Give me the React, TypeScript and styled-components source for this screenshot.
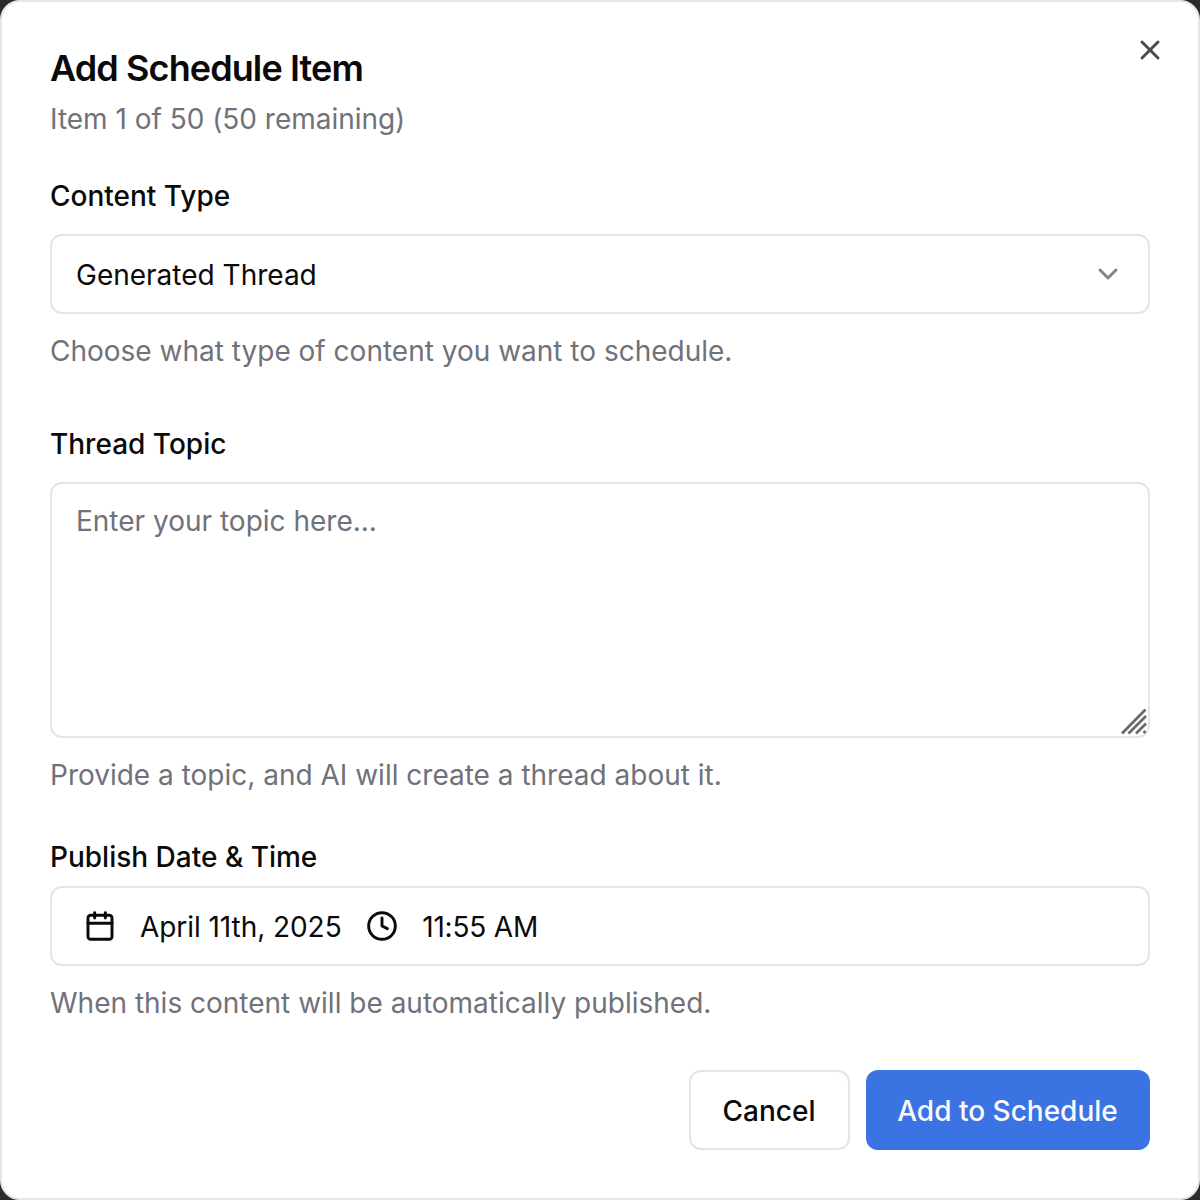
import React from "react";
import styled, { createGlobalStyle } from "styled-components";
import { X, ChevronDown, Calendar, Clock } from "lucide-react";

const Global = createGlobalStyle`
  html, body { margin: 0; padding: 0; background: #2b2b2b; }
  * { box-sizing: border-box; }
  body { font-family: Inter, "Liberation Sans", sans-serif; color: #0a0a0a; }
`;

const Dialog = styled.div`
  position: relative;
  width: 1200px;
  height: 1200px;
  background: #fff;
  border: 2px solid #e5e5e5;
  border-radius: 20px;
  padding: 48px;
  display: flex;
  flex-direction: column;
`;

const CloseButton = styled.button`
  position: absolute;
  top: 32px;
  right: 32px;
  width: 32px;
  height: 32px;
  padding: 0;
  border: 0;
  background: none;
  color: #4b4b50;
  display: flex;
  align-items: center;
  justify-content: center;
`;

const Header = styled.header`
  display: flex;
  flex-direction: column;
  gap: 12px;
  margin-bottom: 42px;
`;

const Title = styled.h2`
  margin: 0;
  font-size: 36px;
  line-height: 36px;
  font-weight: 600;
  letter-spacing: -0.9px;
  color: #0a0a0a;
`;

const Subtitle = styled.p`
  margin: 0;
  font-size: 28px;
  line-height: 42px;
  letter-spacing: -0.02px;
  color: #71717a;
`;

const Field = styled.div<{ $after: number }>`
  display: flex;
  flex-direction: column;
  margin-bottom: ${(p) => p.$after}px;
`;

const Label = styled.label<{ $gap: number }>`
  font-size: 28px;
  line-height: 28px;
  font-weight: 500;
  margin-bottom: ${(p) => p.$gap}px;
`;

const Control = styled.div`
  height: 80px;
  border: 2px solid #e5e5e5;
  border-radius: 12px;
  background: #fff;
  display: flex;
  align-items: center;
  font-size: 28px;
  color: #0a0a0a;
`;

const SelectBox = styled(Control)`
  justify-content: space-between;
  padding: 0 24px 0 24px;
  svg { color: #848488; }
`;

const ControlText = styled.span`
  padding-top: 2px;
`;

const DateBox = styled(Control)`
  padding-left: 32px;
`;

const DateText = styled(ControlText)`
  margin-left: 24px;
  margin-right: 24.6px;
  letter-spacing: -0.06px;
`;

const TimeText = styled(ControlText)`
  margin-left: 24px;
  letter-spacing: -0.2px;
`;

const AreaWrap = styled.div`
  position: relative;
  height: 256px;
`;

const TextArea = styled.textarea`
  display: block;
  width: 100%;
  height: 100%;
  resize: none;
  border: 2px solid #e5e5e5;
  border-radius: 12px;
  padding: 17px 24px 15px;
  font: 28px/40px Inter, "Liberation Sans", sans-serif;
  color: #0a0a0a;
  outline: none;
  &::placeholder { color: #71717a; opacity: 1; }
`;

const Grip = styled.svg`
  position: absolute;
  right: 2px;
  bottom: 2px;
  width: 28px;
  height: 28px;
`;

const Help = styled.p`
  margin: 16px 0 -2px;
  font-size: 28px;
  line-height: 42px;
  color: #71717a;
`;

const Footer = styled.footer`
  display: flex;
  justify-content: flex-end;
  gap: 16px;
`;

const Button = styled.button<{ $primary?: boolean }>`
  width: ${(p) => (p.$primary ? "284px" : "161px")};
  height: 80px;
  padding: 2px 1px 0 0;
  border-radius: 12px;
  font: 500 28px/40px Inter, "Liberation Sans", sans-serif;
  border: ${(p) => (p.$primary ? "0" : "2px solid #e5e5e5")};
  background: ${(p) => (p.$primary ? "#3b73e3" : "#fff")};
  color: ${(p) => (p.$primary ? "#fafafa" : "#0a0a0a")};
`;

export default function App() {
  return (
    <>
      <Global />
      <Dialog>
        <CloseButton aria-label="Close">
          <X size={32} strokeWidth={2.2} />
        </CloseButton>
        <Header>
          <Title>Add Schedule Item</Title>
          <Subtitle>Item 1 of 50 (50 remaining)</Subtitle>
        </Header>
        <Field $after={60}>
          <Label $gap={24}>Content Type</Label>
          <SelectBox>
            <ControlText>Generated Thread</ControlText>
            <ChevronDown size={32} strokeWidth={2.2} />
          </SelectBox>
          <Help>Choose what type of content you want to schedule.</Help>
        </Field>
        <Field $after={49}>
          <Label $gap={24}>Thread Topic</Label>
          <AreaWrap>
            <TextArea placeholder="Enter your topic here..." />
            <Grip viewBox="0 0 28 28" fill="none" stroke="#6a6a6a" strokeWidth="2.8">
              <path d="M2 25.5 L25.5 1.5 M8.5 25.5 L26 8 M16 25.5 L26 15.5 M23.5 25 L25.5 23" />
            </Grip>
          </AreaWrap>
          <Help>Provide a topic, and AI will create a thread about it.</Help>
        </Field>
        <Field $after={48}>
          <Label $gap={15}>Publish Date &amp; Time</Label>
          <DateBox>
            <Calendar size={32} strokeWidth={2.2} />
            <DateText>April 11th, 2025</DateText>
            <Clock size={32} strokeWidth={2.2} />
            <TimeText>11:55 AM</TimeText>
          </DateBox>
          <Help>When this content will be automatically published.</Help>
        </Field>
        <Footer>
          <Button>Cancel</Button>
          <Button $primary>Add to Schedule</Button>
        </Footer>
      </Dialog>
    </>
  );
}
